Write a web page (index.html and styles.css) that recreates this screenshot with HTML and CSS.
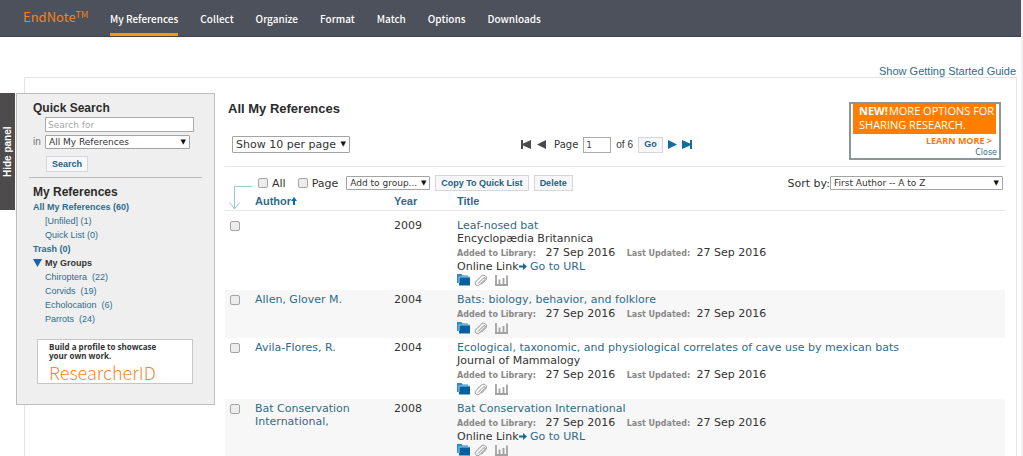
FILE: index.html
```
<!DOCTYPE html>
<html lang="en">
<head>
<meta charset="utf-8">
<title>EndNote - All My References</title>
<link rel="stylesheet" href="styles.css">
</head>
<body>
<svg class="sprite" aria-hidden="true">
  <symbol id="folder" viewBox="0 0 13 12"><path d="M0 0h4.500l1 1.500H11V9H0z" fill="#2b8cc4"/><path d="M2 3h11v8.500H2z" fill="#06609f"/><path d="M1.500 2.500h11.500v1H2.500V9h-1z" fill="#9ccbe8"/></symbol>
  <symbol id="clip" viewBox="0 0 14 13"><path d="M4 9.500 9.300 4.200c1.300-1.300 2.700.1 1.500 1.400L5.500 10.900C3.200 13.100-.3 10 1.900 7.500L7.600 1.900C10-.2 13.900 2.900 11.900 5.600L7.300 10.300" fill="none" stroke="#8b8b8b" stroke-width="1"/></symbol>
  <symbol id="chart" viewBox="0 0 13 12"><path d="M1 1v10M4.500 5.500V11M8.500 4v7M12 1.500V11M0 11h13" fill="none" stroke="#a2a2a2" stroke-width="1.800"/></symbol>
  <symbol id="go" viewBox="0 0 8 7"><path d="M0 2.500h4V0l4 3.500L4 7V4.500H0z" fill="#176b9c"/></symbol>
</svg>
<header class="topbar">
  <a class="brand" href="#">EndNote<sup>TM</sup></a>
  <nav class="tabs">
    <a class="tab active" href="#">My References</a>
    <a class="tab" href="#">Collect</a>
    <a class="tab" href="#">Organize</a>
    <a class="tab" href="#">Format</a>
    <a class="tab" href="#">Match</a>
    <a class="tab" href="#">Options</a>
    <a class="tab" href="#">Downloads</a>
  </nav>
</header>
<div class="guide"><a href="#">Show Getting Started Guide</a></div>
<div class="frame">
  <button class="hide" type="button">Hide panel</button>
  <aside class="side">
    <h2>Quick Search</h2>
    <form class="search">
      <input class="box term" type="text" placeholder="Search for" aria-label="Search for">
      <label for="scope">in</label>
      <span class="pick"><select id="scope"><option>All My References</option></select></span>
      <button class="btn find" type="button">Search</button>
    </form>
    <h2>My References</h2>
    <ul class="groups">
      <li><a class="strong" href="#">All My References (60)</a></li>
      <li class="sub"><a href="#">[Unfiled] (1)</a></li>
      <li class="sub"><a href="#">Quick List (0)</a></li>
      <li><a class="strong" href="#">Trash (0)</a></li>
      <li class="open"><svg width="9" height="8" viewBox="0 0 9 8"><path d="M0 0h9L4.500 8z" fill="#0b6aa8"/></svg>My Groups</li>
      <li class="sub"><a href="#">Chiroptera&nbsp; (22)</a></li>
      <li class="sub"><a href="#">Corvids&nbsp; (19)</a></li>
      <li class="sub"><a href="#">Echolocation&nbsp; (6)</a></li>
      <li class="sub"><a href="#">Parrots&nbsp; (24)</a></li>
    </ul>
    <a class="profile" href="#"><b>Build a profile to showcase<br>your own work.</b><span>ResearcherID</span></a>
  </aside>
  <main class="main">
    <div class="head">
      <div class="headleft">
        <h1>All My References</h1>
        <div class="paging">
          <span class="pick big"><select aria-label="Page size"><option>Show 10 per page</option></select></span>
          <div class="pager">
            <button class="step" type="button" aria-label="First page"><svg width="11" height="9" viewBox="0 0 11 9"><path d="M0 0h2v3.500L10 0v9L2 5.500V9H0z" fill="#4a4a4a"/></svg></button>
            <button class="step" type="button" aria-label="Previous page"><svg width="9" height="9" viewBox="0 0 9 9"><path d="M9 0v9L0 4.500z" fill="#4a4a4a"/></svg></button>
            <label class="pagelabel" for="pageno">Page</label>
            <input class="box pageno" id="pageno" type="text" value="1">
            <span class="of">of 6</span>
            <button class="btn go" type="button">Go</button>
            <button class="step" type="button" aria-label="Next page"><svg width="9" height="9" viewBox="0 0 9 9"><path d="M0 0v9l9-4.500z" fill="#0f6da6"/></svg></button>
            <button class="step" type="button" aria-label="Last page"><svg width="11" height="9" viewBox="0 0 11 9"><path d="M10 0H8v3.500L0 0v9l8-3.500V9h2z" fill="#0f6da6"/></svg></button>
          </div>
        </div>
      </div>
      <div class="promo">
        <div class="promotext"><b>NEW!</b>MORE OPTIONS FOR<br>SHARING RESEARCH.</div>
        <a class="learn" href="#">LEARN MORE &gt;</a>
        <a class="close" href="#">Close</a>
      </div>
    </div>
    <div class="actions">
      <label class="check"><input type="checkbox">All</label>
      <label class="check"><input type="checkbox">Page</label>
      <span class="pick group"><select aria-label="Add to group"><option>Add to group...</option></select></span>
      <button class="btn" type="button">Copy To Quick List</button>
      <button class="btn" type="button">Delete</button>
      <div class="sort"><label for="sort">Sort by:</label><span class="pick"><select id="sort"><option>First Author -- A to Z</option></select></span></div>
    </div>
    <table class="refs">
      <thead>
        <tr>
          <th class="c-check"><svg class="elbow" width="26" height="26" viewBox="0 0 26 26"><path d="M26 1.500H8.500V24M3.500 17.500l5 6.500 5-6.500" fill="none" stroke="#9cc5da"/></svg></th>
          <th class="c-author"><a href="#">Author<svg width="6" height="8" viewBox="0 0 6 8"><path d="M3 0l3 4H4v4H2V4H0z" fill="#0f6da6"/></svg></a></th>
          <th class="c-year"><a href="#">Year</a></th>
          <th><a href="#">Title</a></th>
        </tr>
      </thead>
      <tbody>
        <tr>
          <td><input type="checkbox" aria-label="Select Leaf-nosed bat"></td><td></td><td>2009</td>
          <td><a href="#">Leaf-nosed bat</a><div>Encyclopædia Britannica</div>
            <div class="meta"><b>Added to Library:</b> 27 Sep 2016 <b class="upd">Last Updated:</b> 27 Sep 2016</div>
            <div>Online Link<svg width="8" height="7"><use href="#go"/></svg> <a href="#">Go to URL</a></div>
            <div class="icons"><svg width="13" height="12"><use href="#folder"/></svg><svg width="14" height="13"><use href="#clip"/></svg><svg class="chart" width="13" height="12"><use href="#chart"/></svg></div></td>
        </tr>
        <tr>
          <td><input type="checkbox" aria-label="Select Bats"></td><td><a href="#">Allen, Glover M.</a></td><td>2004</td>
          <td><a href="#">Bats: biology, behavior, and folklore</a>
            <div class="meta"><b>Added to Library:</b> 27 Sep 2016 <b class="upd">Last Updated:</b> 27 Sep 2016</div>
            <div class="icons"><svg width="13" height="12"><use href="#folder"/></svg><svg width="14" height="13"><use href="#clip"/></svg><svg class="chart" width="13" height="12"><use href="#chart"/></svg></div></td>
        </tr>
        <tr>
          <td><input type="checkbox" aria-label="Select Ecological correlates"></td><td><a href="#">Avila-Flores, R.</a></td><td>2004</td>
          <td><a href="#">Ecological, taxonomic, and physiological correlates of cave use by mexican bats</a><div>Journal of Mammalogy</div>
            <div class="meta"><b>Added to Library:</b> 27 Sep 2016 <b class="upd">Last Updated:</b> 27 Sep 2016</div>
            <div class="icons"><svg width="13" height="12"><use href="#folder"/></svg><svg width="14" height="13"><use href="#clip"/></svg><svg class="chart" width="13" height="12"><use href="#chart"/></svg></div></td>
        </tr>
        <tr>
          <td><input type="checkbox" aria-label="Select Bat Conservation"></td><td><a href="#">Bat Conservation International,</a></td><td>2008</td>
          <td><a href="#">Bat Conservation International</a>
            <div class="meta"><b>Added to Library:</b> 27 Sep 2016 <b class="upd">Last Updated:</b> 27 Sep 2016</div>
            <div>Online Link<svg width="8" height="7"><use href="#go"/></svg> <a href="#">Go to URL</a></div>
            <div class="icons"><svg width="13" height="12"><use href="#folder"/></svg><svg width="14" height="13"><use href="#clip"/></svg><svg class="chart" width="13" height="12"><use href="#chart"/></svg></div></td>
        </tr>
      </tbody>
    </table>
  </main>
</div>
</body>
</html>
```
FILE: styles.css
```
* { box-sizing: border-box; }
body { margin: 0; min-height: 100vh; display: flex; flex-direction: column; background: #fff; border-right: 2px solid #f1f1f1; color: #333; font: 11px/13px "DejaVu Sans", Verdana, sans-serif; }
a { color: #2f6c8c; text-decoration: none; }
button, input, select { font: inherit; margin: 0; }
button { cursor: pointer; }
h1, h2 { margin: 0; font-family: "Liberation Sans", Arial, sans-serif; color: #2b2b2b; }
.sprite { position: absolute; width: 0; height: 0; }

.topbar { display: flex; height: 37px; padding-left: 23px; background: #4c515c; border-bottom: 1px solid #3f434d; font-family: "Noto Sans CJK SC", sans-serif; }
.brand { width: 87px; color: #f08321; font-size: 13px; line-height: 34px; }
.brand sup { font-size: 9px; line-height: 0; vertical-align: 4px; }
.tabs { display: flex; gap: 22px; }
.tab { color: #fff; font-size: 10px; font-weight: 500; line-height: 37px; height: 36px; }
.active { border-bottom: 3px solid #f7941d; }

.guide { height: 40px; padding: 27px 5px 0 0; text-align: right; font: 11px/14px "Liberation Sans", Arial, sans-serif; }
.frame { flex: 1; display: flex; align-items: flex-start; margin: 0 4px 0 24px; padding: 15px 11px 0 0; border: 1px solid #e4e4e4; border-bottom: 0; }

.hide { flex: none; width: 15px; height: 117px; margin-left: -25px; padding: 0; border: 0; background: #4d4b4b; color: #fff; font: bold 10px/15px "Liberation Sans", Arial, sans-serif; writing-mode: vertical-rl; transform: rotate(180deg); }
.side { flex: none; width: 199px; margin-left: 1px; padding: 7px 20px 20px 16px; background: #efefef; border: 1px solid #bdbdbd; font: 9px/14px "Liberation Sans", Arial, sans-serif; }
.side h2 { font-size: 12px; line-height: 14px; }
.search { display: grid; grid-template-columns: 12px 1fr; row-gap: 3px; padding-bottom: 5px; margin: 2px -8px 7px -4px; padding-left: 4px; padding-right: 8px; border-bottom: 1px solid #bbb; }
.search label { color: #777; font-size: 10px; }
.box { border: 1px solid #aaa; background: #fff; color: #444; padding: 0 2px; font: 9px/12px "DejaVu Sans", Verdana, sans-serif; }
.box::placeholder { color: #a8a8a8; opacity: 1; }
.term { grid-column: 2; height: 15px; width: 149px; }
.search .pick { width: 145px; }
.pick { position: relative; display: inline-block; color: #222; font: 9px/12px "DejaVu Sans", Verdana, sans-serif; }
.pick select { display: block; width: 100%; height: 14px; padding: 0 8px 0 3px; appearance: none; border: 1px solid #a4a4a4; border-radius: 1px; background: #fff; color: #333; line-height: 12px; }
.pick::after { content: "▼"; position: absolute; right: 4px; top: 1px; font-size: 7px; line-height: 12px; pointer-events: none; color: #111; }
.btn { height: 16px; padding: 0 5px; background: #f7f7f9; border: 1px solid #d5d5dc; color: #235f80; font: bold 9px/13px "Liberation Sans", Arial, sans-serif; white-space: nowrap; }
.find { grid-column: 2; width: 42px; margin: 4px 0 0 1px; }
.groups { list-style: none; margin: 1px 0 13px; padding: 0; }
.sub { padding-left: 12px; }
.strong, .open { font-weight: bold; }
.open { display: flex; align-items: center; gap: 3px; }
.profile { display: block; width: 156px; height: 45px; margin-left: 4px; padding: 2px 0 0 11px; background: #fff; border: 1px solid #c6c6c6; color: #333; font-family: "Noto Sans CJK SC", sans-serif; }
.profile b { display: block; font: bold 8px/9px "Open Sans", sans-serif; }
.profile span { display: block; color: #f08a35; font-size: 18px; font-weight: 300; line-height: 25px; }

.main { flex: 1; min-width: 0; padding: 8px 0 0 10px; }
.head { display: flex; justify-content: space-between; align-items: flex-start; height: 66px; border-bottom: 1px solid #e6e6e6; }
.headleft { flex: 1; }
h1 { padding-left: 3px; font-size: 13px; line-height: 15px; }
.paging { display: flex; align-items: center; justify-content: space-between; margin: 20px 156px 0 7px; }
.pick.big { width: 118px; font-size: 11px; }
.big select { height: 17px; line-height: 15px; }
.big::after { line-height: 15px; }
.pager { display: flex; align-items: center; font-size: 10px; gap: 5px; }
.step { display: flex; padding: 0; border: 0; background: none; }
.pagelabel { margin-left: 3px; }
.pageno { width: 28px; height: 16px; }
.of { font: 10px/13px "Liberation Sans", Arial, sans-serif; }
.go { width: 25px; }
.promo { flex: none; display: flex; flex-direction: column; width: 152px; height: 58px; margin: 1px 4px 0 0; padding: 0 2px; border: 2px solid #8a969c; font-family: "Open Sans", sans-serif; text-align: right; }
.promotext { margin-right: 1px; padding-left: 6px; height: 30px; background: #ff7e00; color: #fff; font-size: 11px; line-height: 14px; text-align: left; white-space: nowrap; }
.promotext b { margin-right: 1px; }
.learn { padding-right: 5px; color: #f07818; font-size: 9px; font-weight: bold; line-height: 13px; }
.close { font: 8px/11px "DejaVu Sans", sans-serif; }

.actions { display: flex; align-items: center; height: 26px; padding: 6px 0 0 33px; gap: 5px; }
.check { display: flex; align-items: center; gap: 4px; margin-right: 7px; }
.check + .pick { margin-left: -4px; }
input[type="checkbox"] { appearance: none; width: 10px; height: 10px; border: 1px solid #a5a5a5; border-radius: 2px; background: #ececec; }
.group { width: 84px; }
.sort { display: flex; align-items: center; margin-left: auto; margin-right: 2px; }
.sort .pick { width: 173px; }

.refs { width: 100%; border-collapse: collapse; table-layout: fixed; }
th { height: 17px; padding: 0; border-bottom: 1px solid #e6e6e6; text-align: left; font: bold 11px/15px "Liberation Sans", Arial, sans-serif; }
.c-check { width: 30px; position: relative; }
.elbow { position: absolute; left: 1px; top: -8px; }
.c-author { width: 139px; }
.c-year { width: 63px; }
td { padding: 3px 0 2px; vertical-align: top; }
td:first-child { padding: 5px 0 0 5px; }
td:nth-child(2) { padding-right: 30px; }
tbody tr:first-child td { padding-top: 8px; }
tbody tr:first-child td:first-child { padding-top: 10px; }
td input { display: block; }
tbody tr:nth-child(even) { background: #f7f7f7; }
.meta { line-height: 15px; }
.meta b { margin-right: 6px; color: #888; font-size: 8px; line-height: 8px; }
.meta .upd { margin-left: 8px; margin-right: 3px; }
.icons { display: flex; align-items: center; gap: 4px; height: 15px; }
.chart { margin-left: 3px; }
```
